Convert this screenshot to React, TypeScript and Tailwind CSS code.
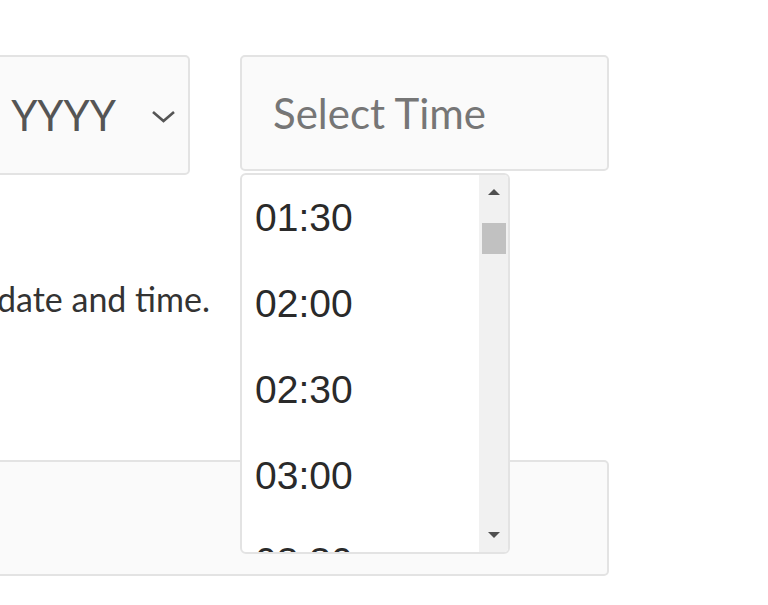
import React from 'react';

const times = ['01:30', '02:00', '02:30', '03:00', '03:30'];

export default function App(): JSX.Element {
  return (
    <div className="w-[768px] h-[605px] overflow-hidden bg-white font-['Lato','Noto_Sans',sans-serif]">
      <div className="pt-[55px] flex items-start">
        {/* year select, cut off on the left */}
        <div className="shrink-0 ml-[-110px] w-[300px] h-[120px] border-2 border-[#e3e3e3] rounded-[5px] bg-[#fafafa] flex items-center justify-end pr-[11px]">
          <span className="text-[42px] text-[#555] mr-[34px]">YYYY</span>
          <svg width="27" height="18" viewBox="0 0 27 18" className="mt-[2px]">
            <path d="M3 5 L13.5 14 L24 5" fill="none" stroke="#555" strokeWidth="2.6" />
          </svg>
        </div>

        {/* time input with open list */}
        <div className="relative ml-[50px]">
          <div className="w-[369px] h-[116px] border-2 border-[#e3e3e3] rounded-[5px] bg-[#fafafa] flex items-center pl-[31px]">
            <span className="text-[42px] text-[#767676]">Select Time</span>
          </div>
          <div className="absolute left-0 top-[118px] w-[270px] h-[381px] border-2 border-[#e3e3e3] rounded-[6px] bg-white flex overflow-hidden z-10">
            <ul className="flex-1 overflow-hidden">
              {times.map((t) => (
                <li
                  key={t}
                  className="h-[86px] flex items-center pl-[13px] text-[39px] text-[#2a2a2a] font-['Liberation_Sans',Arial,sans-serif]"
                >
                  {t}
                </li>
              ))}
            </ul>
            <div className="w-[29px] bg-[#f1f1f1] flex flex-col items-center">
              <svg width="14" height="8" viewBox="0 0 14 8" className="mt-[13px]">
                <path d="M1 7 L7 1 L13 7 Z" fill="#505050" />
              </svg>
              <div className="mt-[27px] w-[24px] h-[31px] bg-[#c1c1c1]" />
              <div className="flex-1" />
              <svg width="14" height="8" viewBox="0 0 14 8" className="mb-[13px]">
                <path d="M1 1 L7 7 L13 1 Z" fill="#505050" />
              </svg>
            </div>
          </div>
        </div>
      </div>

      <div className="mt-[98px] w-[210px] flex justify-end">
        <p className="shrink-0 whitespace-nowrap text-[34px] text-[#333]">
          Please choose a date and time.
        </p>
      </div>

      <div className="mt-[136px] ml-[-20px] w-[629px] h-[116px] border-2 border-[#e3e3e3] rounded-[5px] bg-[#fafafa]" />
    </div>
  );
}
